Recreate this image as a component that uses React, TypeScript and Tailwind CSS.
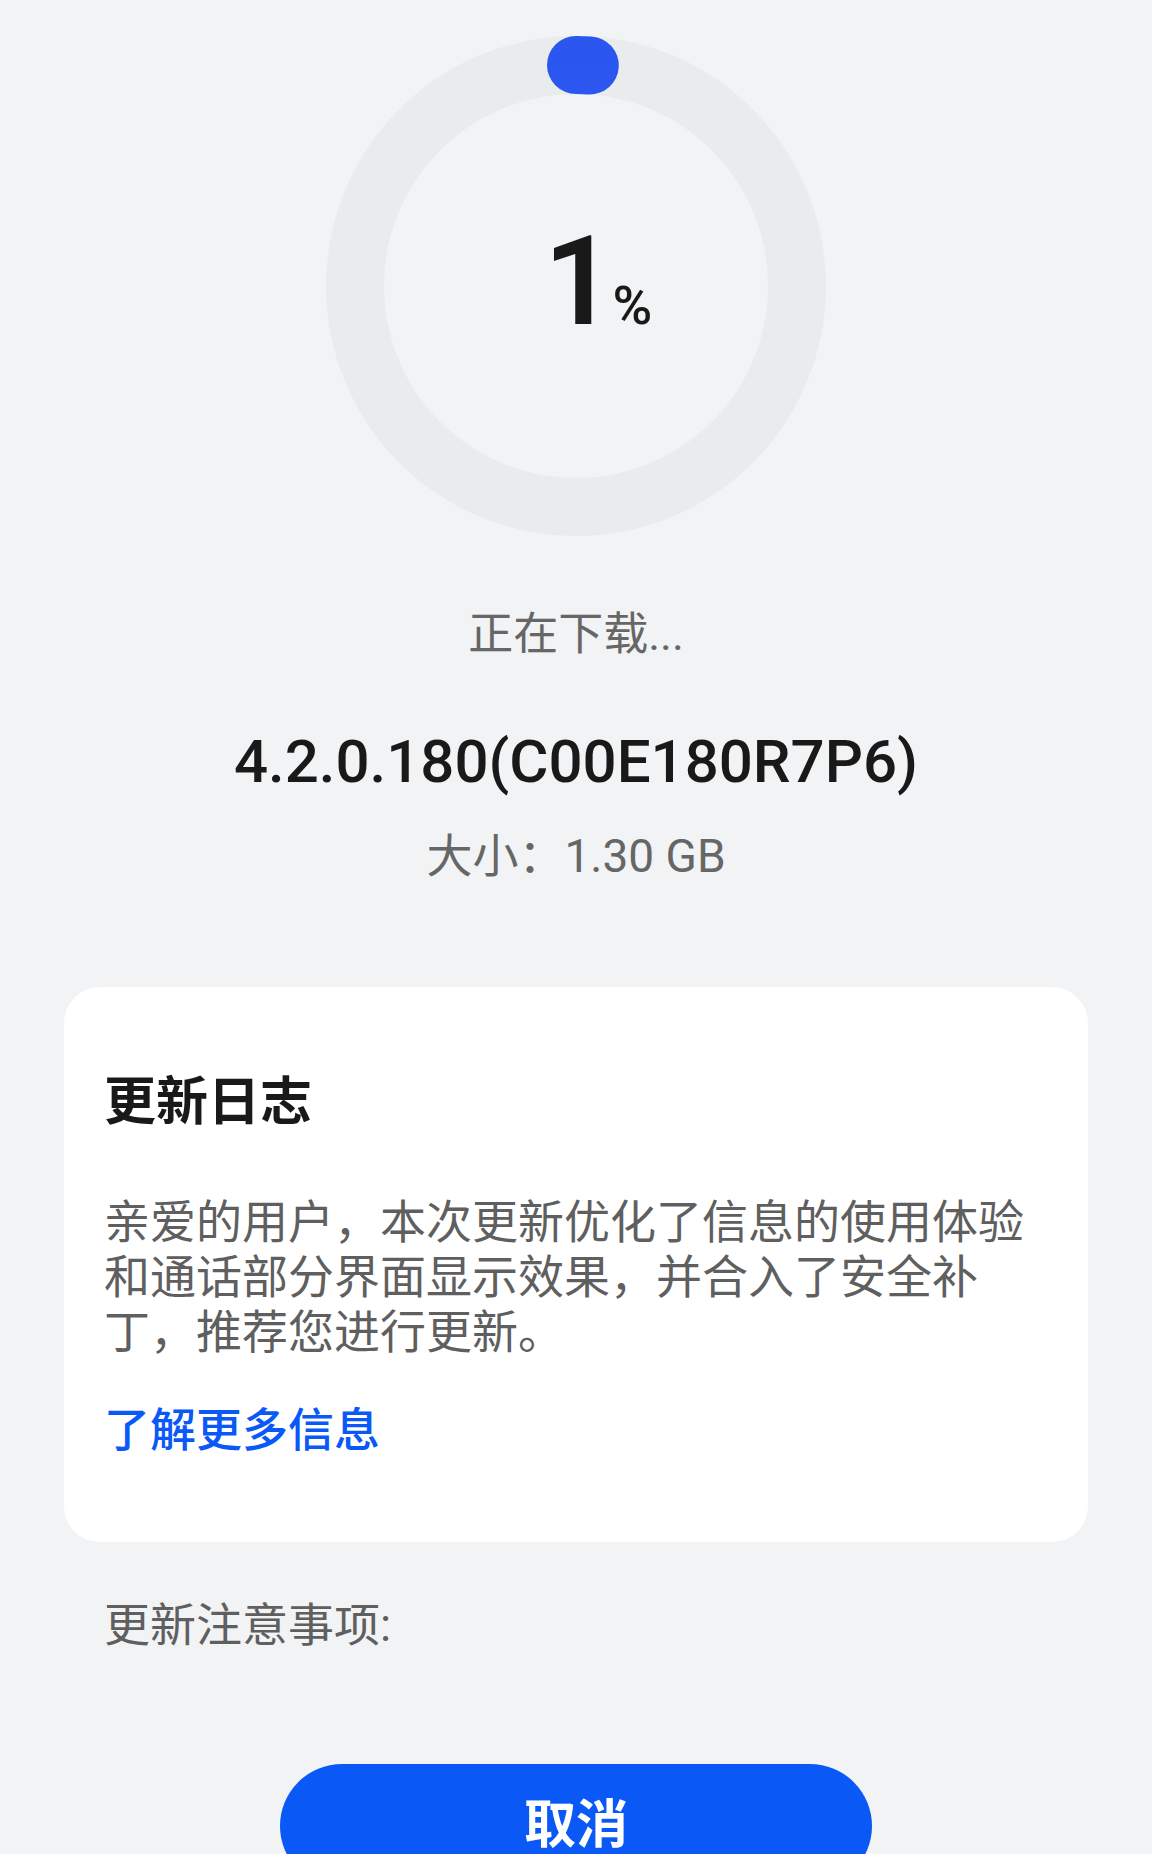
import React from 'react';

const cjk = { fontFamily: 'Roboto, "Noto Sans CJK SC", sans-serif' };

const ProgressRing: React.FC<{ percent: number }> = ({ percent }) => {
    const r = 221;
    const c = 2 * Math.PI * r;
    const arc = Math.max(0.5, (c * percent) / 100);
    return (
        <div className="relative w-[500px] h-[500px]">
            <svg width="500" height="500" viewBox="0 0 500 500">
                <defs>
                    <linearGradient id="ringBlue" x1="0" y1="0" x2="1" y2="0">
                        <stop offset="0%" stopColor="#4b70f7" />
                        <stop offset="100%" stopColor="#2a55ef" />
                    </linearGradient>
                </defs>
                <circle cx="250" cy="250" r={r} fill="none" stroke="#eaebed" strokeWidth="58" />
                <circle
                    cx="250"
                    cy="250"
                    r={r}
                    fill="none"
                    stroke="url(#ringBlue)"
                    strokeWidth="58"
                    strokeLinecap="round"
                    strokeDasharray={`${arc} ${c}`}
                    transform="rotate(-90 250 250)"
                />
            </svg>
            <div className="absolute inset-0 flex items-center justify-center">
                <div className="flex items-baseline text-[#191919] mt-[-8px] ml-[44px]" style={{ fontFamily: 'Roboto, sans-serif' }}>
                    <span className="text-[124px] font-semibold leading-none">{percent}</span>
                    <span className="text-[54px] font-medium leading-none -ml-[2px]">%</span>
                </div>
            </div>
        </div>
    );
};

export default function App() {
    return (
        <div className="min-h-[1854px] bg-[#f1f3f5] flex flex-col items-center pt-[36px] overflow-hidden" style={cjk}>
            <ProgressRing percent={1} />

            <div className="mt-[69px] text-[45px] leading-[60px] text-[#666666]">正在下载...</div>

            <div className="mt-[62px] text-[60px] leading-[70px] font-medium text-[#191919]" style={{ fontFamily: 'Roboto, sans-serif' }}>
                4.2.0.180(C00E180R7P6)
            </div>

            <div className="mt-[31px] text-[46px] leading-[56px] text-[#666666]">大小：1.30 GB</div>

            <div className="mt-[103px] w-[1024px] bg-white rounded-[36px] pt-[84px] pb-[84px] px-[40px]">
                <div className="text-[52px] leading-[64px] font-bold text-[#191919]">更新日志</div>
                <p className="mt-[60px] text-[46px] leading-[55px] text-[#5f5f5f]">
                    亲爱的用户，本次更新优化了信息的使用体验和通话部分界面显示效果，并合入了安全补丁，推荐您进行更新。
                </p>
                <div className="mt-[42px] text-[46px] leading-[56px] font-medium text-[#0a59f7]">了解更多信息</div>
            </div>

            <div className="self-stretch mt-[55px] pl-[104px] text-[46px] leading-[56px] text-[#5f5f5f]">更新注意事项:</div>

            <button className="mt-[111px] w-[592px] h-[124px] rounded-full bg-[#0a59f7] text-white text-[52px] font-bold leading-none">
                取消
            </button>
        </div>
    );
}
